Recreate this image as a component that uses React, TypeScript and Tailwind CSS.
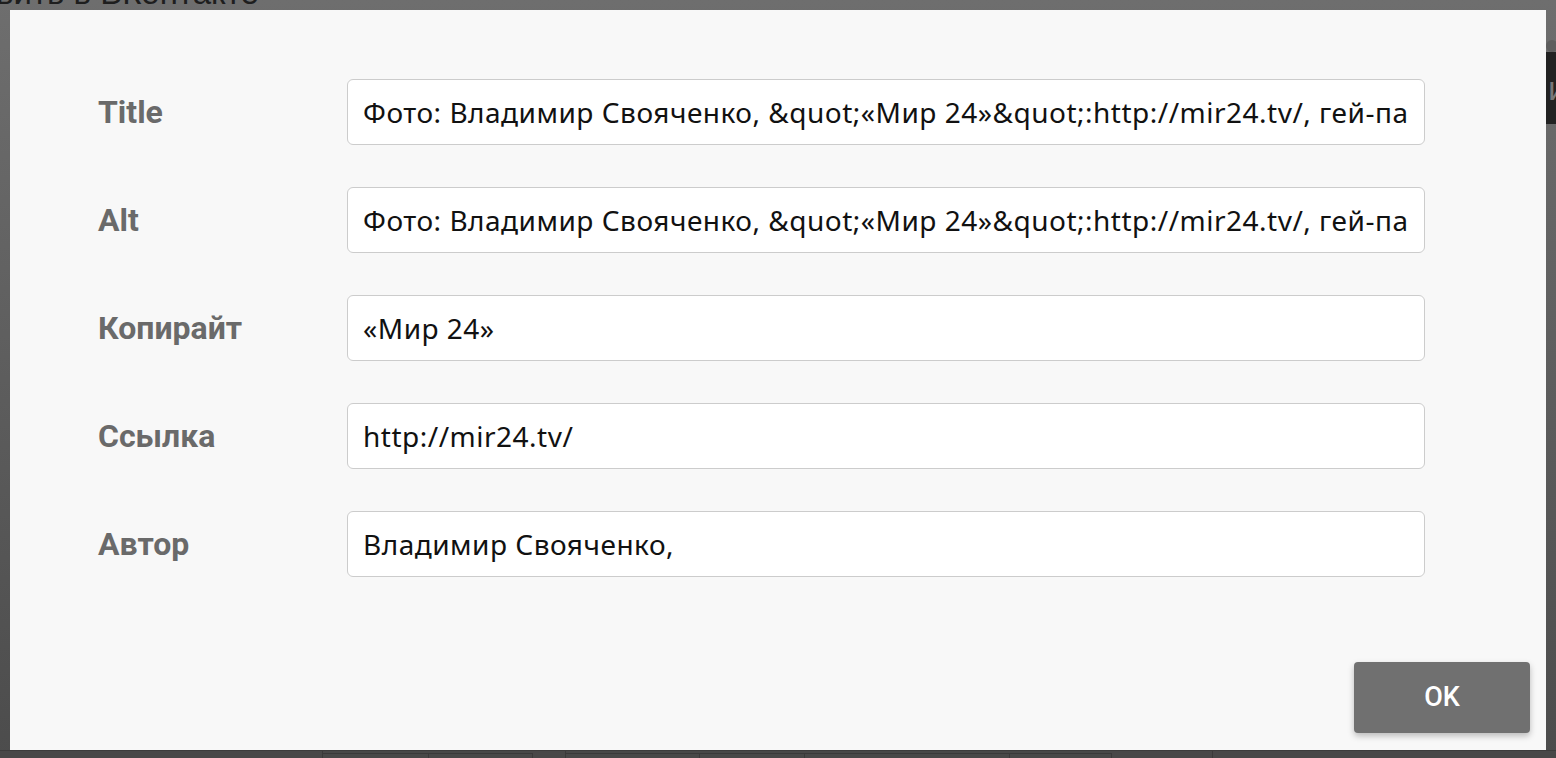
import React from "react";

const fields = [
  { label: "Title", value: "Фото: Владимир Свояченко, &quot;«Мир 24»&quot;:http://mir24.tv/, гей-парад" },
  { label: "Alt", value: "Фото: Владимир Свояченко, &quot;«Мир 24»&quot;:http://mir24.tv/, гей-парад" },
  { label: "Копирайт", value: "«Мир 24»" },
  { label: "Ссылка", value: "http://mir24.tv/" },
  { label: "Автор", value: "Владимир Свояченко," },
];

export default function App() {
  return (
    <div className="relative h-[758px] w-[1556px] overflow-hidden bg-[linear-gradient(to_bottom,#6e6e6e,#4c4c4c)]">
      {/* background page content under the overlay */}
      <div className="absolute left-[-4px] top-[-24px] font-['Liberation_Sans',sans-serif] text-[33px] leading-none text-[#1e1e1e] whitespace-nowrap">
        вить в ВКонтакте
      </div>
      <div className="absolute left-[1546px] top-[52px] flex h-[72px] w-[20px] items-center bg-[#222] pl-[2px] font-['Liberation_Sans',sans-serif] text-[34px] text-[#777]">
        и
      </div>
      <div className="absolute left-[1546px] top-[40px] h-[12px] w-[12px] rounded-full bg-[#5e5e5e]" />
      <div className="absolute left-0 top-[750px] flex h-[8px] w-full border-t border-[#3c3c3c] bg-[#484848]">
        <div className="w-[323px] border-r border-[#3a3a3a]" />
        <div className="w-[106px] border-r border-t border-[#3a3a3a] mt-[2px]" />
        <div className="w-[104px] border-r border-t border-[#3a3a3a] mt-[2px]" />
        <div className="w-[33px] border-r border-[#3a3a3a]" />
        <div className="w-[134px] border-r border-t border-[#3a3a3a] mt-[2px]" />
        <div className="w-[105px] border-r border-t border-[#3a3a3a] mt-[2px]" />
        <div className="w-[205px] border-r border-t border-[#3a3a3a] mt-[2px]" />
        <div className="w-[102px] border-r border-t border-[#3a3a3a] mt-[2px]" />
        <div className="w-[101px] border-r border-[#3a3a3a]" />
      </div>

      {/* dialog */}
      <div className="relative p-[10px]">
        <div className="flex h-[740px] w-[1536px] flex-col bg-[#f8f8f8] pl-[88px] pr-[16px] pt-[69px] pb-[17px]">
          <div className="grid grid-cols-[249px_1078px] gap-y-[42px]">
            {fields.map((f) => (
              <React.Fragment key={f.label}>
                <div className="flex h-[66px] items-center font-['Roboto',sans-serif] text-[32px] font-bold text-[#6a6a6a]">
                  {f.label}
                </div>
                <input
                  readOnly
                  defaultValue={f.value}
                  className="h-[66px] w-[1078px] rounded-[6px] border-[1.5px] border-[#cccccc] bg-white px-[15px] font-['Noto_Sans',sans-serif] text-[28px] tracking-[0.5px] text-[#111] outline-none"
                />
              </React.Fragment>
            ))}
          </div>
          <div className="mt-auto flex justify-end">
            <button className="flex h-[71px] w-[176px] items-center justify-center rounded-[4px] bg-[#707070] font-['Roboto',sans-serif] text-[27px] font-medium text-white shadow-[0_3px_6px_rgba(0,0,0,0.25)]">
              OK
            </button>
          </div>
        </div>
      </div>
    </div>
  );
}
